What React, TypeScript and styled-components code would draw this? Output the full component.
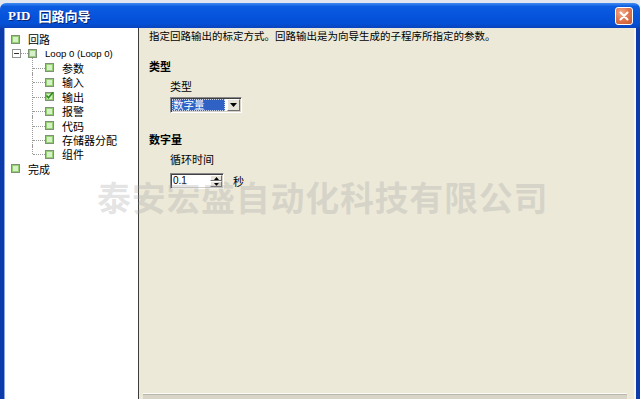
import React from "react";
import styled, { createGlobalStyle } from "styled-components";

const CJK = `"Noto Sans CJK SC", "Liberation Sans", sans-serif`;

const Global = createGlobalStyle`
  html, body { margin: 0; padding: 0; width: 640px; height: 399px; overflow: hidden; background: #e2e6ee; }
  #root { width: 640px; height: 399px; }
`;

const Window = styled.div`
  position: relative;
  margin-top: 3px;
  height: 396px;
  display: flex;
  flex-direction: column;
  border-radius: 6px 6px 0 0;
  overflow: hidden;
  font-family: ${CJK};
`;

const TitleBar = styled.div`
  flex: none;
  height: 25px;
  display: flex;
  align-items: center;
  justify-content: space-between;
  padding: 0 7px 0 8px;
  background: linear-gradient(180deg, #3f8cf3 0%, #0c5ce0 14%, #0654dc 50%, #0450d6 82%, #0a44bd 100%);
`;

const Title = styled.div`
  display: flex;
  align-items: center;
  color: #fff;
  font-weight: bold;
  font-size: 13px;
  line-height: 16px;
  text-shadow: 1px 1px 0 #0b2270;
`;

const TitleLatin = styled.span`
  font-family: "Liberation Serif", serif;
  margin-right: 8px;
`;

const CloseBtn = styled.div`
  width: 18px;
  height: 18px;
  box-sizing: border-box;
  border: 1px solid #fff;
  border-radius: 3px;
  background: radial-gradient(circle at 35% 30%, #f4ae8c 0%, #e07a52 45%, #c9542c 100%);
  display: flex;
  align-items: center;
  justify-content: center;
`;

const Body = styled.div`
  flex: 1;
  min-height: 0;
  display: flex;
  border-left: 4px solid #0c3cab;
  border-right: 4px solid #0c3cab;
`;

const Tree = styled.div`
  flex: none;
  width: 135px;
  box-sizing: border-box;
  background: #fff;
  border-right: 1px solid #3c3c3c;
  box-shadow: inset 1px 0 0 #8aa5e0;
  padding-top: 4px;
  font-size: 11px;
  line-height: 14px;
`;

const Row = styled.div<{ $indent: number }>`
  position: relative;
  height: 14.4px;
  display: flex;
  align-items: center;
  padding-left: ${(p) => p.$indent}px;
  white-space: nowrap;
  color: #000;
`;

const ChildRow = styled(Row)<{ $last?: boolean }>`
  &::before {
    content: "";
    position: absolute;
    left: 28px;
    top: -3px;
    height: ${(p) => (p.$last ? "calc(50% + 3px)" : "calc(100% + 3px)")};
    border-left: 1px dotted #9a9a9a;
  }
  &::after {
    content: "";
    position: absolute;
    left: 29px;
    top: 50%;
    width: 12px;
    border-top: 1px dotted #9a9a9a;
  }
`;

const NodeIcon = styled.span`
  position: relative;
  flex: none;
  width: 9px;
  height: 9px;
  box-sizing: border-box;
  border: 1px solid #7f8f78;
  background: #d6f0c8;
  box-shadow: inset 0 0 0 1px #95d070;
  margin-right: 8px;
  display: flex;
  align-items: center;
  justify-content: center;
`;

const Expander = styled.span`
  flex: none;
  width: 9px;
  height: 9px;
  box-sizing: border-box;
  border: 1px solid #929292;
  background: #fff;
  display: flex;
  align-items: center;
  justify-content: center;
  &::before {
    content: "";
    width: 5px;
    height: 1px;
    background: #333;
  }
`;

const Connector = styled.span`
  flex: none;
  width: 7px;
  border-top: 1px dotted #9a9a9a;
`;

const LatinLabel = styled.span`
  font-family: "Liberation Sans", sans-serif;
  font-size: 9.6px;
`;

const Pane = styled.div`
  flex: 1;
  min-width: 0;
  display: flex;
  flex-direction: column;
  background: #ece9d8;
  border-right: 2px solid #f7f6ef;
  padding: 1px 0 0 10px;
  color: #000;
`;

const Desc = styled.div`
  font-size: 10.5px;
  line-height: 14px;
  white-space: nowrap;
`;

const Heading = styled.div<{ $gap: number }>`
  margin-top: ${(p) => p.$gap}px;
  font-size: 11px;
  font-weight: bold;
  line-height: 14px;
`;

const Group = styled.div`
  display: flex;
  flex-direction: column;
  align-items: flex-start;
  padding-left: 21px;
`;

const Label = styled.div`
  margin-top: 6px;
  font-size: 11px;
  line-height: 14px;
`;

const Sunken = styled.div`
  box-sizing: border-box;
  height: 16px;
  display: flex;
  align-items: stretch;
  background: #fff;
  border: 1px solid;
  border-color: #8a8a8a #ffffff #ffffff #8a8a8a;
  box-shadow: inset 1px 1px 0 #404040, inset -1px -1px 0 #d4d0c8;
  padding: 1px;
`;

const Select = styled(Sunken)`
  margin-top: 4px;
  width: 72px;
`;

const SelectValue = styled.div`
  flex: 1;
  min-width: 0;
  margin-right: 2px;
  background: #2f62c4;
  color: #fff;
  font-size: 10.5px;
  line-height: 12px;
  padding-left: 1px;
  white-space: nowrap;
  overflow: visible;
  outline: 1px dotted #c8d4ee;
  outline-offset: -1px;
`;

const RaisedBtn = styled.div`
  flex: none;
  width: 13px;
  box-sizing: border-box;
  background: #e6e3d8;
  border: 1px solid;
  border-color: #ffffff #6e6e6e #6e6e6e #ffffff;
  display: flex;
  align-items: center;
  justify-content: center;
`;

const SpinRow = styled.div`
  margin-top: 7px;
  display: flex;
  align-items: center;
`;

const Spinner = styled(Sunken)`
  width: 54px;
`;

const SpinValue = styled.div`
  flex: 1;
  font-family: "Liberation Sans", sans-serif;
  font-size: 10px;
  line-height: 12px;
  padding-left: 1px;
`;

const SpinBtns = styled.div`
  flex: none;
  width: 12px;
  display: flex;
  flex-direction: column;
`;

const SpinHalf = styled(RaisedBtn)`
  width: 12px;
  flex: 1;
`;

const Unit = styled.span`
  margin-left: 9px;
  font-size: 11px;
  line-height: 14px;
`;

const Footer = styled.div`
  margin: auto 7px 0 -6px;
  height: 5px;
  border-top: 1px solid #fbfaf4;
  background: linear-gradient(180deg, #b9b7ab 0px, #b9b7ab 1px, #d8d5c8 1px);
`;

const Watermark = styled.div`
  position: absolute;
  left: 97px;
  top: 177px;
  font-family: ${CJK};
  font-weight: 700;
  font-size: 34px;
  line-height: 34px;
  letter-spacing: 0.7px;
  color: rgba(160, 160, 160, 0.28);
  white-space: nowrap;
  pointer-events: none;
`;

const Check = () => (
  <svg width="9" height="9" viewBox="0 0 9 9" style={{ position: "absolute", left: -1, top: -2 }}>
    <path d="M1.5 4.5 L3.5 6.8 L8 1.2" stroke="#2f8a1f" strokeWidth="1.6" fill="none" />
  </svg>
);

const children = ["参数", "输入", "输出", "报警", "代码", "存储器分配", "组件"];

export default function App() {
  return (
    <>
      <Global />
      <Window>
        <TitleBar>
          <Title>
            <TitleLatin>PID</TitleLatin>
            <span>回路向导</span>
          </Title>
          <CloseBtn>
            <svg width="10" height="10" viewBox="0 0 10 10">
              <path d="M1.5 1.5 L8.5 8.5 M8.5 1.5 L1.5 8.5" stroke="#fff" strokeWidth="2" strokeLinecap="round" />
            </svg>
          </CloseBtn>
        </TitleBar>
        <Body>
          <Tree>
            <Row $indent={7}>
              <NodeIcon />
              回路
            </Row>
            <Row $indent={8}>
              <Expander />
              <Connector />
              <NodeIcon />
              <LatinLabel>Loop 0 (Loop 0)</LatinLabel>
            </Row>
            {children.map((c, i) => (
              <ChildRow key={c} $indent={41} $last={i === children.length - 1}>
                <NodeIcon>{c === "输出" && <Check />}</NodeIcon>
                {c}
              </ChildRow>
            ))}
            <Row $indent={7}>
              <NodeIcon />
              完成
            </Row>
          </Tree>
          <Pane>
            <Desc>指定回路输出的标定方式。回路输出是为向导生成的子程序所指定的参数。</Desc>
            <Heading $gap={16}>类型</Heading>
            <Group>
              <Label>类型</Label>
              <Select>
                <SelectValue>数字量</SelectValue>
                <RaisedBtn>
                  <svg width="7" height="4" viewBox="0 0 7 4">
                    <path d="M0 0 H7 L3.5 4 Z" fill="#000" />
                  </svg>
                </RaisedBtn>
              </Select>
            </Group>
            <Heading $gap={19}>数字量</Heading>
            <Group>
              <Label>循环时间</Label>
              <SpinRow>
                <Spinner>
                  <SpinValue>0.1</SpinValue>
                  <SpinBtns>
                    <SpinHalf>
                      <svg width="5" height="3" viewBox="0 0 5 3">
                        <path d="M0 3 H5 L2.5 0 Z" fill="#000" />
                      </svg>
                    </SpinHalf>
                    <SpinHalf>
                      <svg width="5" height="3" viewBox="0 0 5 3">
                        <path d="M0 0 H5 L2.5 3 Z" fill="#000" />
                      </svg>
                    </SpinHalf>
                  </SpinBtns>
                </Spinner>
                <Unit>秒</Unit>
              </SpinRow>
            </Group>
            <Footer />
          </Pane>
        </Body>
        <Watermark>泰安宏盛自动化科技有限公司</Watermark>
      </Window>
    </>
  );
}
